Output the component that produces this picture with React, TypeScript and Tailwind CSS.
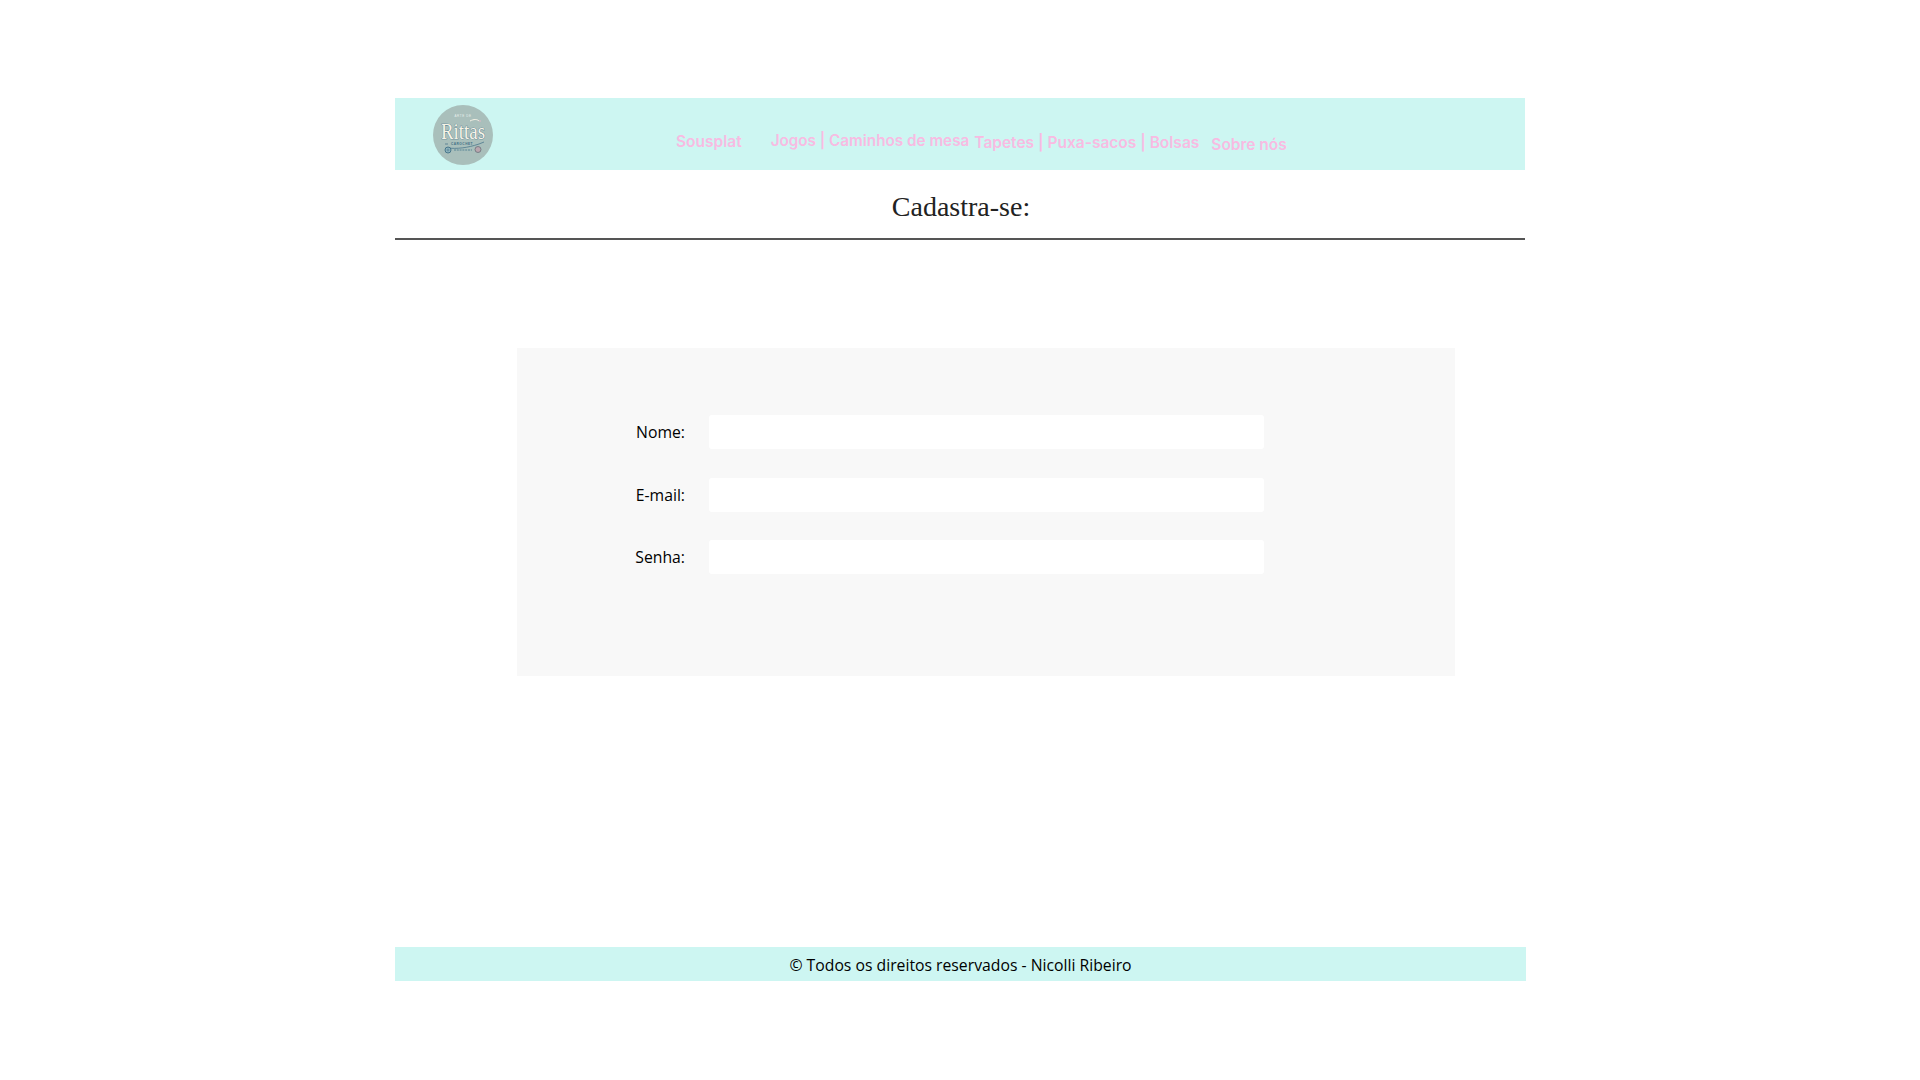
const Logo = () => (
  <svg viewBox="0 0 60 60" className="h-[60px] w-[60px] shrink-0">
    <circle cx="30" cy="30" r="30" fill="#a9bfbb" />
    <text x="30" y="12" textAnchor="middle" fontSize="3" fontFamily="Liberation Sans, sans-serif" fill="#e8efec" letterSpacing="0.6">
      ARTE DE
    </text>
    <text transform="translate(30 33.5) scale(0.786 1)" textAnchor="middle" fontSize="24" fontFamily="Liberation Serif, serif" fill="#f7f3e6" stroke="#3f6f86" strokeWidth="0.7" paintOrder="stroke">
      Rittas
    </text>
    <path d="M37 16c4-2 7-2 9 0" fill="none" stroke="#f7f3e6" strokeWidth="1" />
    <circle cx="47" cy="16" r="0.8" fill="#e8b7c6" />
    <path d="M12 39h3" stroke="#3f6f86" strokeWidth="0.7" />
    <text x="29" y="40" textAnchor="middle" fontSize="3.2" fontWeight="700" fontFamily="Liberation Sans, sans-serif" fill="#3f6f86" letterSpacing="0.5">
      CAROCHET
    </text>
    <path d="M46 39l5-2M14 43c10 1 20 0 32-4" fill="none" stroke="#3f6f86" strokeWidth="0.7" />
    <circle cx="15" cy="45" r="3" fill="#8fb4bd" stroke="#3f6f86" strokeWidth="0.9" />
    <circle cx="15" cy="45" r="1" fill="none" stroke="#3f6f86" strokeWidth="0.5" />
    <circle cx="45" cy="44.5" r="3" fill="#b9a6ae" stroke="#68707a" strokeWidth="0.8" />
    <path d="M21 45h18" stroke="#4f7f92" strokeWidth="0.9" strokeDasharray="2 0.8" />
  </svg>
);

const navClass = "whitespace-nowrap font-['Inter',sans-serif] font-semibold leading-5 text-[#f8bbe2]";

const fields = ["Nome:", "E-mail:", "Senha:"];

const App = () => {
  return (
    <div className="min-h-screen bg-white font-['Open_Sans',sans-serif] text-black">
      <div className="ml-[395px] w-[1130px] pt-[98px]">
        <header className="flex h-[72px] items-start bg-[#cdf6f2] pl-[38px] pt-[7px]">
          <Logo />
          <nav className="ml-[183px] flex items-start">
            <a className={`${navClass} mt-[27px] text-[15.5px]`}>Sousplat</a>
            <a className={`${navClass} ml-[29px] mt-[26px] text-[15.25px]`}>Jogos | Caminhos de mesa</a>
            <a className={`${navClass} ml-[5px] mt-[28px] text-[15.5px]`}>Tapetes | Puxa-sacos | Bolsas</a>
            <a className={`${navClass} ml-[12px] mt-[30px] text-[15.5px]`}>Sobre nós</a>
          </nav>
        </header>

        <div className="flex h-[70px] items-start justify-center border-b-2 border-[#555555] pl-[2px] pt-[21px]">
          <h1 className="font-['Liberation_Serif',serif] text-[28px] font-normal leading-8 text-[#222222]">Cadastra-se:</h1>
        </div>

        <main className="ml-[122px] mt-[108px] h-[328px] w-[938px] bg-[#f8f8f8] pt-[67px]">
          <form className="flex flex-col gap-[28.5px]">
            {fields.map((label) => (
              <div key={label} className="flex items-center gap-[24px]">
                <label className="w-[168px] text-right text-[15.75px] leading-6">{label}</label>
                <input className="h-[34px] w-[555px] rounded-[3px] bg-white outline-none" />
              </div>
            ))}
          </form>
        </main>

        <footer className="mt-[271px] flex h-[34px] w-[1131px] items-center justify-center bg-[#cdf6f2] pt-[3px] text-[15.75px]">
          © Todos os direitos reservados - Nicolli Ribeiro
        </footer>
      </div>
    </div>
  );
};

export default App;
